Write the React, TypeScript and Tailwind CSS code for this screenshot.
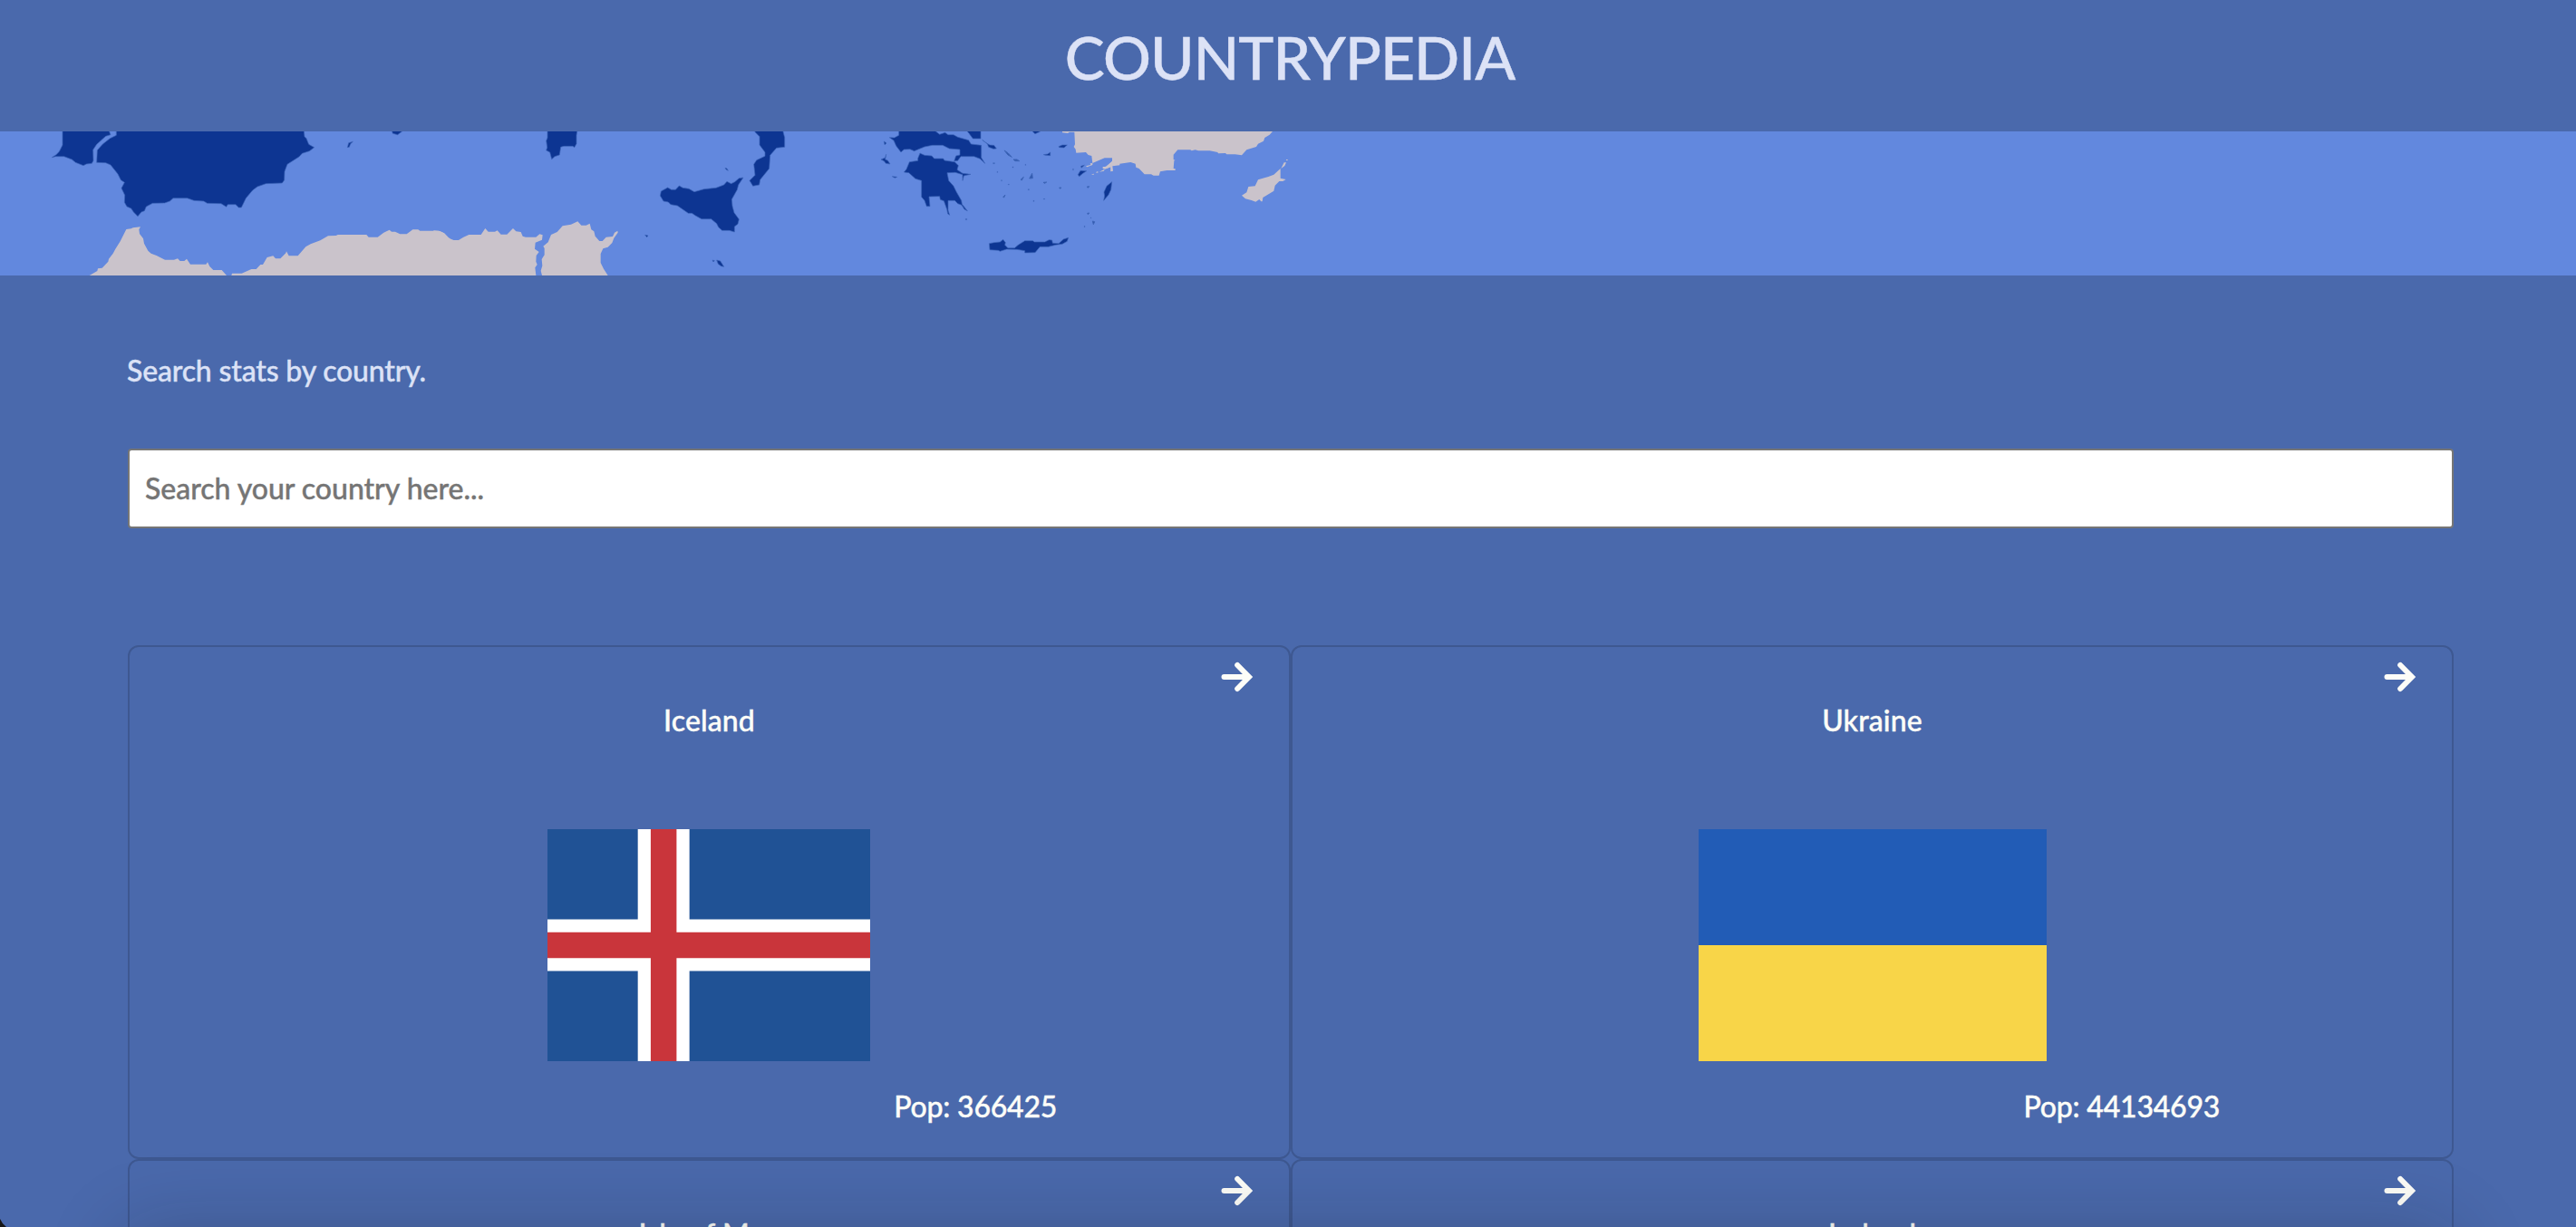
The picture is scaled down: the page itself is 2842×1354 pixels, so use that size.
import React from "react";

function Arrow() {
  return (
    <svg className="h-9 w-9" viewBox="0 0 36 36" fill="none" stroke="#fdfdf8" strokeWidth="6" strokeLinecap="round">
      <path d="M3.5 18H29" />
      <path d="M18.2 5L31 18L18.2 31" strokeLinejoin="miter" />
    </svg>
  );
}

function EuropeMap() {
  const at = (x: number) => `translate(${x} -15) scale(0.333333)`;
  return (
    <svg className="block h-[159px] w-[1440px]" viewBox="0 0 1440 159">
      <g transform={at(0)} fill="#0d3592" stroke="#3d65b8" strokeWidth="2">
        <path d="M207 35V90L196 112L186 122L172 131L184 128L212 128L238 138L250 148L276 158L286 153L304 151L309 142L308 106L320 88L350 61L366 56L358 35Z" />
        <path d="M385 35V58L364 68L340 87L322 107L320 148L350 149L366 156L390 186L400 206L412 214L402 233L413 256L412 280L420 294L434 300L442 312L456 326L468 312L478 308L484 294L505 283L545 282L562 276L573 266H620L642 274L674 276L686 283L732 284L749 295L754 287H780L790 297H799L814 266L836 240L852 228L880 218L934 216L941 206L942 178L951 154L990 129L1000 118L1024 110L1040 98L1022 88L1014 68L1008 62L1005 35Z" />
        <path d="M1150 98L1154 83L1168 79L1160 86L1156 97ZM1294 35L1300 52L1316 56L1332 44V35Z" />
      </g>
      <g transform={at(0)} fill="#cac3cb">
        <path d="M296 522L322 507L324 499L338 497L358 476L360 467L374 449L382 434L398 409L418 369L434 367L440 364L465 361L460 370L462 384L474 400L477 416L490 440L500 449L518 456L546 470H576L588 466L596 474H610L618 467L630 485H682L687 478L694 492L706 504H734L750 522Z" />
        <path d="M766 522L768 515H800L832 501H848L862 486H870L884 462L904 457L912 466H928L946 448L948 442L956 457H986L1012 427L1028 418L1060 406L1086 391L1112 390L1118 387H1213L1220 395H1250L1270 380L1289 371L1296 377H1308L1324 385H1346L1366 370H1384L1390 374H1452L1470 382L1484 397L1505 408V522Z" />
      </g>
      <g transform={at(480)} fill="#cac3cb">
        <path d="M-5 373L16 375L30 382L50 402L62 405H78L94 395L112 387H152L166 366L176 377H198L206 373L218 386H238L258 366L268 376L284 378L290 392L300 395H334L346 385L356 388L354 404L332 413L330 434L344 444L335 456L334 476L338 486L331 496L334 522H-5Z" />
        <path d="M354 522L350 506L355 490L353 468L362 454V432L358 425L374 412L384 387L404 378L422 358L450 353L472 343L484 356H500L512 350L517 370L526 376L530 392L544 408H554L566 395L588 393L594 380L604 374L605 380L592 398L586 414L572 428L556 433L548 450V480L558 500L572 522Z" />
      </g>
      <g transform={at(480)} fill="#0d3592" stroke="#3d65b8" strokeWidth="2">
        <path d="M372 35V66L368 76L371 98L368 108L380 114L386 137L396 128L412 123L416 97L426 94H456L461 98L468 86V58L472 35Z" />
        <path d="M1052 35L1060 48L1074 62V90L1092 114V127L1064 140L1055 154L1059 190L1041 208L1052 226L1073 222L1076 205L1106 168L1109 124L1130 100L1157 97V65L1152 46V35Z" />
        <path d="M745 258L748 243L770 231L782 238H796L808 225L820 232L840 235L858 245L890 236L930 232L956 222L966 211L980 218L992 212L1006 200L1020 198L1004 222L1000 238L982 270L984 292L990 314L1006 336L1002 352L991 360V378L974 373H950L938 362L932 350L914 335H882L862 324L850 316H838L802 291L780 287L772 279L756 276Z" />
        <path d="M960 166L966 168L970 175L963 171ZM695 388L705 390L701 395ZM918 471L925 473L921 477ZM932 471L944 474L956 493L947 491L937 484Z" />
      </g>
      <g transform={at(960)} fill="#0d3592" stroke="#3d65b8" strokeWidth="2">
        <path d="M95 35V58L80 66L64 65L78 75L86 93L102 114L112 105L132 104L146 110L180 96L206 91H240L262 102L297 105V123L284 126L278 143L290 142L300 128H344L364 136L380 151L368 132V91L334 87L326 74L290 64L276 56H258L248 49L230 55L216 44V35Z" />
        <path d="M165 117L158 134V142L130 146L120 170L112 180L128 182L150 202L170 208V262L180 274L187 293H198L195 261L230 260L232 271L244 275L254 303L257 318L263 322L258 306V274H280L290 284L303 289L312 303L322 308L304 286L302 274L286 246L276 226L260 208L255 182L282 181L306 188V208L310 192L333 187L306 184L288 172L292 158L280 146L246 141L242 135H212L204 126L180 124Z" />
        <path d="M312 35L326 50L340 69H366V35ZM371 73L382 82L396 90L410 91L418 102L408 103L392 97L388 86ZM535 43L546 53L562 46V42Z" />
        <path d="M53 121L50 132L36 138L46 143L52 151L66 153L58 141L50 138ZM46 78L54 84L48 89ZM73 194L89 196L82 199Z" />
        <path d="M394 416L410 413L430 411L440 403L448 413L446 421L456 431H478L490 421L512 407H538L544 411H578L592 404L602 405L604 415L624 416L640 402L656 397L652 409L636 418L614 421L590 427H562L546 446L512 447V440L486 436L452 435L430 442L424 439L396 437Z" />
        <path d="M800 212L797 238L789 255L773 274L776 258L774 246L783 226ZM624 95L636 90L652 90L642 99L626 98ZM574 122L588 120L596 114V125L580 124ZM688 188L696 175L716 176L704 184L692 194ZM698 160L709 157L699 166Z" />
        <path d="M444 108L456 116L469 130L456 123ZM474 138L486 138L494 143H480ZM536 184L538 200L527 201ZM498 205L508 196L502 207ZM573 214L584 213L578 217ZM440 262L447 255L443 264ZM736 342L743 344L739 353ZM718 228L725 227L721 232ZM719 316L725 315L721 320ZM626 231L632 231L629 235Z" fill="#2f57ae" strokeWidth="3" />
        <path d="M407 149h5v3h-5zM420 178h2v3h-2zM434 206h2v3h-2zM457 220h3v2h-3zM471 162h3v3h-3zM513 154h2v3h-2zM523 236h3v3h-3zM540 274h3v3h-3zM574 268h4v2h-4zM671 169h2v4h-2zM709 358h2v4h-2zM730 330h2v2h-2zM316 334h4v4h-4z" fill="#3d65b8" strokeWidth="1" />
      </g>
      <g transform={at(960)} fill="#cac3cb">
        <path d="M636 35V49L654 51L660 47H676L678 88L674 96L680 104L682 116L714 114L722 123L733 126L736 150L776 133H801V144L782 162H770V168L778 170L796 162V178L804 176L802 160L826 157V152L862 147L878 152L880 164L890 168L908 187H930L938 191H956L960 178L982 174H1010V169L1004 168L1006 142L1010 141L1004 138V122L1018 106H1060L1064 109L1076 106L1086 109H1124L1150 114L1152 118L1176 117L1180 121H1208L1230 124L1246 106L1278 96L1284 86L1302 77L1306 66L1322 56L1332 45V35Z" />
        <path d="M1230 257L1246 247L1252 228L1274 226L1284 205L1318 195L1336 188L1358 168V200L1376 204L1366 210H1354L1340 224L1336 242L1300 264L1298 277H1294L1288 270L1276 278L1262 273L1242 268ZM1360 168L1370 148L1377 148L1372 159ZM1377 138h5v3h-5zM732 187l8 -2v4zM746 181l8 -4v5zM758 179L776 170L774 176Z" />
        <path d="M714 160L730 156L728 151L736 150V156L718 163Z" />
        <path d="M770 166L782 160L801 144V170L797 178V163L782 168Z" />
      </g>
    </svg>
  );
}

function IcelandFlag() {
  return (
    <svg className="mr-px h-64 w-[356px]" viewBox="0 0 25 18" preserveAspectRatio="none">
      <path d="M0 0h25v18H0z" fill="#205295" />
      <path d="M7 0h4v18H7zM0 7h25v4H0z" fill="#fff" />
      <path d="M8 0h2v18H8zM0 8h25v2H0z" fill="#c9353b" />
    </svg>
  );
}

function UkraineFlag() {
  return (
    <div className="flex h-64 w-96 flex-col">
      <div className="flex-1 bg-[#225cb6]" />
      <div className="flex-1 bg-[#f8d548]" />
    </div>
  );
}

type CardProps = { name: string; pop: string; flag?: React.ReactNode };

function CountryCard({ name, pop, flag }: CardProps) {
  return (
    <article className="flex h-[567px] flex-col rounded-xl border-2 border-[#3e5891] text-[#fdfdf8]">
      <div className="flex justify-end pt-[15px] pr-[39px]">
        <Arrow />
      </div>
      <h2 className="mt-2.5 text-center text-[32px] leading-10 tracking-[0.1px]">{name}</h2>
      <div className="mt-[100px] flex h-64 justify-center">{flag}</div>
      <p className="mt-[30px] mr-[20%] text-right text-[32px] leading-10 tracking-[-0.2px]">{pop}</p>
    </article>
  );
}

export default function App() {
  return (
    <div className="relative h-[1354px] w-full overflow-hidden bg-[#4a69ac] font-['Lato',sans-serif] font-medium text-[#dce2f6] [-webkit-text-stroke:0.4px_currentColor]">
      <header className="flex h-[145px] justify-center pt-[23px] pl-1">
        <h1 className="text-[66px] leading-[80px] tracking-[-0.93px]">COUNTRYPEDIA</h1>
      </header>
      <div className="h-[159px] bg-[#6288de]">
        <EuropeMap />
      </div>
      <main className="pr-[135px] pl-[141px]">
        <p className="-ml-px pt-[85px] text-[32px] leading-10 tracking-[-0.17px]">Search stats by country.</p>
        <input
          className="mt-[66px] block h-[88px] w-full rounded-[4px] border-2 border-[#767676] bg-white px-[17px] pb-0.5 text-[32px] tracking-[-0.03px] placeholder:text-[#757575] placeholder:[-webkit-text-stroke:0.4px_#757575]"
          placeholder="Search your country here..."
        />
        <section className="mt-[129px] grid grid-cols-2">
          <CountryCard name="Iceland" pop="Pop: 366425" flag={<IcelandFlag />} />
          <CountryCard name="Ukraine" pop="Pop: 44134693" flag={<UkraineFlag />} />
          <CountryCard name="Isle of Man" pop="Pop: 85032" />
          <CountryCard name="Ireland" pop="Pop: 4994724" />
        </section>
      </main>
      <div className="pointer-events-none absolute top-full right-[130px] left-[130px] h-40 rounded-[40px] shadow-[0_0_85px_rgba(20,20,20,0.2)]" />
      <svg className="absolute bottom-0 left-0 h-2.5 w-2" viewBox="0 0 8 10">
        <path d="M0 1Q2 6 7 10H0Z" fill="#161616" />
      </svg>
    </div>
  );
}
